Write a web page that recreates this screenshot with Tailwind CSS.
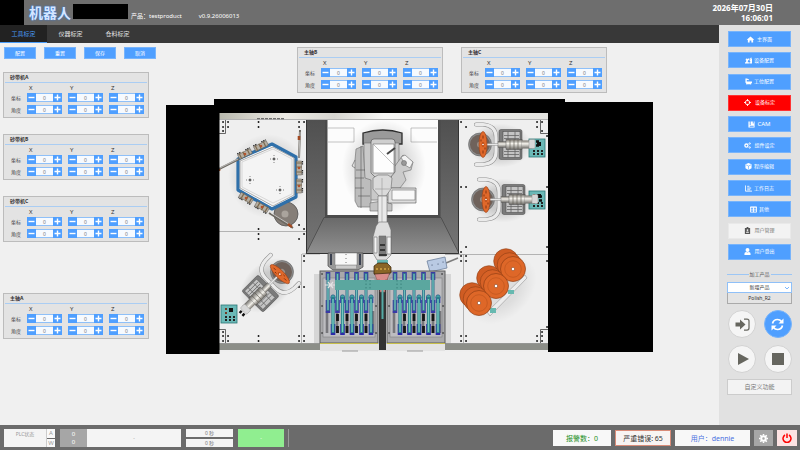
<!DOCTYPE html>
<html lang="zh-CN">

<head>
    <meta charset="utf-8">
    <meta name="viewport" content="width=device-width, initial-scale=1">
    <script src="https://cdn.jsdelivr.net/npm/@tailwindcss/browser@4"></script>
    <title>工具标定</title>
</head>

<body class="min-h-screen flex flex-col bg-[#f0f0f0] text-[#333] text-[5px] leading-none font-['Noto_Sans','Noto_Sans_CJK_SC',sans-serif]">

    <!-- Header -->
    <header class="h-[25px] bg-[#6e6e6e] flex items-center text-white">
        <div class="w-6 h-full bg-black"></div>
        <h1 class="pl-[5px] text-[14px] font-bold text-[#d4e6ff] [text-shadow:0_0_2px_#2f80ff]">机器人</h1>
        <div class="ml-[2px] w-[55px] h-[15px] bg-black self-start mt-1"></div>
        <p class="pl-[3px] pt-[6px] text-[6px]">产品：testproduct</p>
        <p class="pl-[17px] pt-[6px] text-[6px]">v0.9.26006013</p>
        <div class="ml-auto pr-[27px] pt-px text-[8px] leading-[10px] font-bold text-right">
            <div>2026年07月30日</div>
            <div>16:06:01</div>
        </div>
    </header>

    <div class="flex-1 flex">
        <main class="flex-1 min-w-0">
            <!-- Tabs -->
            <nav class="h-[18px] bg-[#383838] flex text-[6px] text-[#e6e6e6]">
                <a href="#" class="w-[47px] flex items-center justify-center bg-[#222] text-[#4a9cf8] border-b border-[#4a9cf8]">工具标定</a>
                <a href="#" class="w-[47px] flex items-center justify-center">仪器标定</a>
                <a href="#" class="w-[47px] flex items-center justify-center">仓料标定</a>
            </nav>

            <div class="flex pt-1">
                <!-- Left column -->
                <div class="w-[166px] shrink-0 pl-[3px]">
                    <div class="flex gap-2 pl-px text-white">
                        <button class="w-8 h-3 bg-[#4f9fff] border border-[#78b4fb]">配置</button>
                        <button class="w-8 h-3 bg-[#4f9fff] border border-[#78b4fb]">重置</button>
                        <button class="w-8 h-3 bg-[#4f9fff] border border-[#78b4fb]">保存</button>
                        <button class="w-8 h-3 bg-[#4f9fff] border border-[#78b4fb]">取消</button>
                    </div>
                    <div class="mt-[13px] flex flex-col gap-4">
                        <div data-panel="砂带机A"></div>
                        <div data-panel="砂带机B"></div>
                        <div data-panel="砂带机C"></div>
                        <div data-panel="主轴A" class="mt-[35px]"></div>
                    </div>
                </div>

                <!-- Work cell -->
                <div class="flex-1 min-w-0">
                    <div class="flex gap-[18px] pl-[131px]">
                        <div data-panel="主轴B"></div>
                        <div data-panel="主轴C"></div>
                    </div>
                    <svg class="mt-[6px] w-[487px] h-[256px]" viewBox="166 99 487 256" role="img" aria-label="工作站">
                        <defs>
                            <linearGradient id="topBand" x1="0" x2="1">
                                <stop offset="0" stop-color="#b9b9ae" /><stop offset=".2" stop-color="#eceae4" /><stop offset=".35" stop-color="#d6d5d0" /><stop offset=".5" stop-color="#f6f6f4" /><stop offset="1" stop-color="#e4e4e0" />
                            </linearGradient>
                            <linearGradient id="ramp" x1="0" x2="0" y1="0" y2="1">
                                <stop offset="0" stop-color="#696969" /><stop offset="1" stop-color="#909090" />
                            </linearGradient>
                            <linearGradient id="wall" x1="0" x2="0" y1="0" y2="1">
                                <stop offset="0" stop-color="#505050" /><stop offset="1" stop-color="#757575" />
                            </linearGradient>
                            <linearGradient id="metal" x1="0" x2="0" y1="0" y2="1">
                                <stop offset="0" stop-color="#77736c" /><stop offset=".4" stop-color="#f4f2ec" /><stop offset="1" stop-color="#6c6a66" />
                            </linearGradient>
                            <radialGradient id="shade">
                                <stop offset=".5" stop-color="#000" stop-opacity=".15" /><stop offset="1" stop-color="#000" stop-opacity="0" />
                            </radialGradient>

                            <!-- grinder, origin on the disc centre -->
                            <g id="grinder">
                                <ellipse cx="20" cy="1" rx="32" ry="22" fill="url(#shade)" />
                                <path d="M-4-20h7q13 1 13 13v14q0 12-13 13h-7" fill="none" stroke="#8e8e8e" stroke-width="4.2" stroke-linecap="round" />
                                <path d="M-4-20h7q13 1 13 13v14q0 12-13 13h-7" fill="none" stroke="#ebebeb" stroke-width="3.2" stroke-linecap="round" />
                                <circle r="11.5" fill="#8d8d8d" stroke="#555" stroke-width=".5" />
                                <circle r="10" fill="#6f625b" />
                                <circle r="3" fill="#9a9089" />
                                <rect x="19" y="-15" width="23" height="30" rx="2" fill="#7b7b7b" stroke="#444" stroke-width=".5" />
                                <rect x="23" y="-13" width="17" height="26" fill="#c4c4c4" stroke="#444" stroke-width=".5" />
                                <path d="M24-9h15M24-6h15M24 7h15M24 10h15M28-13v26M35-13v26" stroke="#666" stroke-width=".8" />
                                <rect x="6" y="-1" width="14" height="2" fill="#e7e7e7" stroke="#777" stroke-width=".4" />
                                <rect x="18" y="-3" width="9" height="6" fill="url(#metal)" stroke="#555" stroke-width=".3" />
                                <rect x="26" y="-5" width="16" height="10" fill="url(#metal)" stroke="#444" stroke-width=".4" />
                                <path d="M30-5v10M34-5v10M38-5v10" stroke="#59554c" stroke-width=".6" />
                                <rect x="42" y="-4" width="10" height="8" fill="url(#metal)" />
                                <rect x="49" y="-5" width="6" height="9" rx="1" fill="#d8d8d8" stroke="#888" stroke-width=".4" />
                                <path d="M56-3h3M56 1h3" stroke="#111" stroke-width="2.4" />
                                <ellipse cx="3" rx="4" ry="13" fill="#e0682a" stroke="#974017" stroke-width=".6" />
                                <ellipse cx="3" rx="1.4" ry="2.4" fill="#b84d18" />
                                <path d="M3-9v3M3 6v3M1-5v2M5 3v2" stroke="#7c300d" stroke-width=".9" />
                                <circle cx="3" r=".8" fill="#fff" />
                            </g>

                            <g id="box">
                                <rect width="16" height="18" fill="#6bb9b7" stroke="#2b7775" stroke-width=".8" />
                                <rect x="8" y="3" width="4" height="4" fill="#111" />
                                <path d="M4 4h2M4 8h2" stroke="#733a25" stroke-width="2" />
                                <path d="M4 12h10M4 15h10" stroke="#222" stroke-width="2" stroke-dasharray="2 2" />
                            </g>

                            <g id="stack">
                                <circle cx="-7" cy="-8" r="12.3" fill="#cf5c23" stroke="#8f3e14" stroke-width=".6" />
                                <circle cx="-3.5" cy="-4" r="12.3" fill="#d66126" stroke="#8f3e14" stroke-width=".6" />
                                <circle r="12.5" fill="#de6728" stroke="#8f3e14" stroke-width=".7" />
                                <circle r="8.3" fill="none" stroke="#b04e1b" stroke-width=".5" />
                                <circle r="1.7" fill="#fff" stroke="#70300f" stroke-width=".5" />
                            </g>

                            <!-- blade holders, upper and lower row -->
                            <g id="bladeUp">
                                <path d="M0 1v8M0 29v13" stroke="#3a3aa6" stroke-width="4.6" />
                                <path d="M0 2v38" stroke="#356f8c" stroke-width="3" />
                                <path d="M0 3v36" stroke="#6bbdb7" stroke-width="1.4" />
                            </g>
                            <g id="bladeLow">
                                <path d="M0 2v6M0 29v11" stroke="#2c2ca8" stroke-width="4.6" />
                                <circle cy="2" r="2.2" fill="#43a3a3" stroke="#244f86" stroke-width=".6" />
                                <path d="M0 2v36" stroke="#297f8c" stroke-width="3.2" />
                                <path d="M0 4v33" stroke="#74c9bd" stroke-width="1.4" />
                            </g>
                            <g id="tray">
                                <rect width="58" height="72" fill="#a9a9ab" stroke="#5d5d5d" />
                                <rect x="3" y="7" width="52" height="59" fill="#bdbdc0" stroke="#777" stroke-width=".5" />
                                <path d="M7 40v22M17 40v22M27 40v22M36 40v22M46 40v22M53 40v22" stroke="#77777b" stroke-width="2.6" />
                                <use href="#bladeUp" x="8" /><use href="#bladeUp" x="17.5" /><use href="#bladeUp" x="27" /><use href="#bladeUp" x="36.5" /><use href="#bladeUp" x="46" />
                                <path d="M17.500 43v7M27 43v7M36.500 43v7M46 43v7M17.500 55v7M27 55v7M36.500 55v7M46 55v7" stroke="#161616" stroke-width="2.8" />
                                <use href="#bladeLow" x="13" y="24" /><use href="#bladeLow" x="22.5" y="24" /><use href="#bladeLow" x="32" y="24" /><use href="#bladeLow" x="41.5" y="24" /><use href="#bladeLow" x="51" y="24" />
                                <path d="M2 3h.1M55 3h.1M2 35h.1M56 35h.1M2 62h.1M56 62h.1" stroke="#222" stroke-width="1.6" stroke-linecap="round" />
                            </g>
                            <g id="clamp">
                                <rect x="-7" y="-2.5" width="14" height="5" fill="#b5aea2" stroke="#5f574c" stroke-width=".5" />
                                <path d="M-5-3v6M-1-3v6M4-3v6" stroke="#7c6a4f" stroke-width="1.2" />
                                <path d="M-7-3.5h4M2-3.5h5" stroke="#222" stroke-width="1.2" stroke-dasharray="1.4 .8" />
                                <circle r="1.3" fill="#b5522b" />
                            </g>
                            <g id="holes">
                                <circle r=".9" fill="#222" />
                                <path d="M-4 0h8M0-4v8" stroke="#444" stroke-width=".8" stroke-dasharray=".8 1.6" />
                            </g>
                        </defs>

                        <!-- floor -->
                        <path d="M219 113h329v239H219z" fill="#efefef" />
                        <path d="M219 113h329v6H219z" fill="url(#topBand)" />
                        <path d="M219 343h101v7H219zM445 343h103v7H445z" fill="#8c8e88" />
                        <path d="M219 119.500h329M219 231.500h87M301.500 254v89M302 254h18M445 254.500h103M463.500 254v89M219 343.500h329" fill="none" stroke="#9a9a9a" stroke-width=".7" />
                        <path d="M219 133.500h6.500V120M548 133.500h-7.500V120M219 329.500h6.500V343M548 329.500h-7.500V343" fill="none" stroke="#444" stroke-width=".8" />
                        <path d="M257 118.700h28" stroke="#555" stroke-dasharray="3 1" />

                        <!-- bolts -->
                        <g fill="none" stroke="#181818" stroke-width="1.8" stroke-linecap="round">
                            <path d="M223 122h.1M228 122h.1M223 127h.1M228 127h.1M223 131h.1M258.500 122h.1M258.500 127h.1M299 122h.1M304 122h.1M299 127h.1" />
                            <path d="M258.500 229h.1M258.500 234h.1M258.500 239h.1M299 225h.1M304 229h.1M304 234h.1M299 239h.1M304 256h.1M304 261h.1M304 287h.1M299 287h.1" />
                            <path d="M223 332h.1M223 336h.1M228 336h.1M223 341h.1M228 341h.1M258.500 336h.1M258.500 341h.1M299 336h.1M304 336h.1M299 341h.1M304 341h.1" />
                            <path d="M461 122h.1M466 127h.1M461 187h.1M466 187h.1M466 247h.1M461 252h.1M461 256h.1M466 256h.1M461 261h.1M466 261h.1M461 336h.1M466 336h.1M461 341h.1M466 341h.1" />
                            <path d="M537 122h.1M542 122h.1M537 127h.1M542 131h.1M547 136h.1M547 187h.1M547 247h.1M547 261h.1M547 327h.1M542 332h.1M537 336h.1M542 336h.1M537 341h.1M542 341h.1" />
                        </g>

                        <!-- robot cabinet -->
                        <path d="M306 120h153v133H306z" fill="url(#wall)" />
                        <path d="M306 253.500l18-36h117l18 36z" fill="url(#ramp)" stroke="#444" stroke-width=".7" />
                        <path d="M325 120h2.500v95H438v-95h2.500v98H325z" fill="#4b4b4b" />
                        <path d="M327.500 120H438v95H327.500z" fill="#fcfcfc" />
                        <path d="M306.500 120v133.500h152V120" fill="none" stroke="#333" />
                        <path d="M328 128h26v14h-26M437 128h-26v14h26" fill="none" stroke="#888" stroke-width=".5" />
                        <ellipse cx="384" cy="168" rx="42" ry="48" fill="url(#shade)" />

                        <!-- robot -->
                        <g stroke="#6b6b6b" stroke-width=".6">
                            <path d="M363 144v-11q20-6 39 0v11z" fill="#9a9a9a" stroke="#2c2c2c" stroke-width="1.3" />
                            <path d="M364 143h35v57h-35z" fill="#c9c9c9" />
                            <path d="M356 149l7-3 2 32 6 2v27h-13l-3-6v-41z" fill="#bcbcbc" />
                            <path d="M355 160l-3 6 3 2M355 178h9M355 188h9M358 196h12M361 146v62M356 170h9" fill="none" stroke="#555" />
                            <path d="M370 203l12-2 10 3v7h-22z" fill="#c3c3c3" />
                            <path d="M392 170l11-15 10 7-2 8-8 2 3 8-6 8h-10z" fill="#cbcbcb" />
                            <path d="M401 157l4-2 8 7-3 6-5-3z" fill="#f3f3f3" />
                            <circle cx="404" cy="163" r="2.500" fill="#999" />
                            <path d="M388 188h28v15h-28z" fill="#dedede" stroke="#555" />
                            <path d="M392 190h23v10h-23z" fill="#f9f9f9" />
                            <path d="M371 142q0-3 3-3h18q3 0 3 3v30l-5 6h-14l-5-5z" fill="#cfcfcf" stroke="#4d4d4d" />
                            <path d="M373 144h21v29h-21z" fill="#fdfdfd" />
                            <path d="M373 144l21 21" fill="none" stroke="#999" />
                            <path d="M387 154l8-6" fill="none" stroke="#444" stroke-width="2" />
                            <path d="M373 178l5-3h10l4 3-1 11-5 7h-7l-6-7z" fill="#dadada" />
                            <path d="M378 196h9v28h-9z" fill="#e9e9e9" />
                            <path d="M382 178v44M375 189h15" fill="none" stroke="#999" />
                            <path d="M376 226l3-4h9l3 8v25l-5 5h-9l-4-7v-16z" fill="#dedede" />
                            <path d="M379 236h7v20h-7z" fill="#7b7b7b" />
                            <path d="M374 237h3v16h-3zM387 237h4v17h-4z" fill="#f4f4f4" />
                        </g>
                        <path d="M380 245h5M380 250h5M379 255h8" stroke="#222" stroke-width="1.3" />

                        <!-- scanner -->
                        <path d="M328 253h35v14l-5 3h-25l-5-4z" fill="#999" stroke="#444" stroke-width=".7" />
                        <path d="M335 253h22v12h-22z" fill="#f8f8f8" stroke="#777" stroke-width=".5" />
                        <path d="M331 254v11M360 254v11" stroke="#3b4150" stroke-width="2" />
                        <path d="M336 267h20" stroke="#ccc" stroke-width="3" />
                        <path d="M346 254v11" stroke="#555" stroke-width=".8" stroke-dasharray="1 3" />
                        <path d="M446 263l12-5" stroke="#7d7d7d" stroke-width="1.600" />
                        <path d="M427 261l18-4 2 11-17 4z" fill="#b9cae3" stroke="#6e819c" stroke-width=".8" />
                        <path d="M432 265h.1M438 264h.1M443 262h.1" stroke="#44536d" stroke-width="1.2" stroke-linecap="round" />

                        <!-- trays -->
                        <path d="M314 274h6v69h-6zM445 274h6v69h-6z" fill="#000" fill-opacity=".1" />
                        <path d="M320 343h125v8H320z" fill="#e3e3e3" />
                        <use href="#tray" x="320" y="271" />
                        <use href="#tray" x="387" y="271" />
                        <path d="M320 343.500h58M387 343.500h58" stroke="#c5bd4a" />
                        <path d="M342 351h16M407 351h16" stroke="#999" />
                        <path d="M379 290h7v60h-7z" fill="#333" />
                        <path d="M374 272h16l-3 8h-2v12h-5v-12h-3z" fill="#d98c8a" stroke="#8b5452" stroke-width=".6" />
                        <path d="M382.500 288v31" stroke="#55aaa5" stroke-width="2" />
                        <path d="M325 285h10M328 282l5 6M328 288l5-6" stroke="#e3e3e3" stroke-width="1.2" />
                        <path d="M335 280h95v10h-95z" fill="#5ba79f" />
                        <path d="M366 280v10M370 280v10M397 280v10M401 280v10" stroke="#347a73" stroke-width=".8" stroke-dasharray="1.500 2" />
                        <path d="M377 260h11v4h-11z" fill="#68b5b0" />
                        <path d="M374 266l4-3h9l4 4v6l-17 1z" fill="#8a6526" stroke="#33240b" stroke-width=".7" />
                        <path d="M376 269h13" stroke="#d5a746" stroke-width="1.4" stroke-dasharray="2 2" />

                        <!-- hexagon table -->
                        <ellipse cx="268" cy="176" rx="40" ry="42" fill="url(#shade)" />
                        <circle cx="286" cy="214" r="12" fill="#857e78" stroke="#555" stroke-width=".8" />
                        <circle cx="285" cy="214" r="3.500" fill="#aaa49d" />
                        <path d="M238 159l34-15 24 13v40l-24 12-34-19z" fill="#fff" stroke="#2f70aa" stroke-width="3.200" stroke-linejoin="round" />
                        <path d="M240 161l33-14 21 11v37l-21 11-33-18z" fill="#f4f4f4" stroke="#777" stroke-width=".6" />
                        <path d="M242 162l31-13 19 10v35l-19 9-31-16z" fill="none" stroke="#c5c5c5" stroke-width=".6" />
                        <use href="#holes" x="274" y="159" /><use href="#holes" x="250" y="180" /><use href="#holes" x="280" y="190" />
                        <path d="M219 169l20-10M300 130l-1 28M269 213l24 15" stroke="#6c6861" stroke-width="2" />
                        <path d="M220 168l18-9M300 132l-1 26M271 213l21 13" stroke="#ddd" stroke-width=".7" />
                        <path d="M299 136v4M288 224l4 3M219 169v2" stroke="#a24a22" stroke-width="2.6" />
                        <use href="#clamp" transform="translate(245 154) rotate(-26)" />
                        <use href="#clamp" transform="translate(261 146) rotate(-26)" />
                        <use href="#clamp" transform="translate(299 168) rotate(90)" />
                        <use href="#clamp" transform="translate(299 186) rotate(90)" />
                        <use href="#clamp" transform="translate(246 198) rotate(210)" />
                        <use href="#clamp" transform="translate(262 207) rotate(210)" />

                        <!-- grinders -->
                        <use href="#grinder" transform="translate(282 272) rotate(135)" />
                        <use href="#box" x="221" y="305" />
                        <use href="#box" x="529" y="139" />
                        <use href="#box" x="529" y="191" />
                        <use href="#grinder" transform="translate(480 144.500)" />
                        <use href="#grinder" transform="translate(483 199.500)" />

                        <!-- disc rack -->
                        <ellipse cx="502" cy="290" rx="40" ry="28" fill="url(#shade)" transform="rotate(-44 502 290)" opacity=".5" />
                        <path d="M487 312l38-37 2 3-37 38z" fill="#ececec" stroke="#888" stroke-width=".5" />
                        <path d="M508 290h6v4h-6zM490 308h6v5h-6z" fill="#67b9b0" />
                        <use href="#stack" x="513" y="269" />
                        <use href="#stack" x="496" y="286" />
                        <use href="#stack" x="479" y="303" />

                        <!-- masked areas -->
                        <path d="M166 105h48v-6h351v3h88v250H548V113H219.500v241H166z" fill="#000" />
                    </svg>
                </div>
            </div>
        </main>

        <!-- Sidebar -->
        <aside class="w-[81px] shrink-0 bg-[#e1e1e1] px-[9px] pt-[6px]">
            <nav class="h-[229px] flex flex-col justify-between text-white">
                <button class="h-4 flex items-center justify-center gap-[3px] bg-[#4f9fff] border border-[#78b4fb]">
                    <svg class="w-[7px] h-[7px]" viewBox="0 0 16 16" fill="currentColor"><path d="M8 1L0 8l1 1 1-.5V15h4v-5h4v5h4V8.500l1 .5 1-1z" /></svg>主界面
                </button>
                <button class="h-4 flex items-center justify-center gap-[2px] bg-[#4f9fff] border border-[#78b4fb]">
                    <svg class="w-[7px] h-[7px]" viewBox="0 0 16 16" fill="currentColor"><path d="M0 15v-3h2l2-6 5-3 2 2-4 3-1 4h3v3zM10 8l2-2V2l3-1v3l1 1v10h-6v-3h2V9z" /><circle cx="4" cy="6" r="2.500" /></svg>设备配置
                </button>
                <button class="h-4 flex items-center justify-center gap-[2px] bg-[#4f9fff] border border-[#78b4fb]">
                    <svg class="w-[7px] h-[7px]" viewBox="0 0 16 16" fill="currentColor"><path d="M1 1h3l5 2-1 2-4-1v4h12v3l-2 2v2h-2v-1H5v1H3v-2l-2-3z" /></svg>工位配置
                </button>
                <button class="h-4 flex items-center justify-center gap-1 bg-[#ff0000] border border-[#f33]">
                    <svg class="w-[7px] h-[7px]" viewBox="0 0 16 16" fill="none" stroke="currentColor" stroke-width="2"><circle cx="8" cy="8" r="5" /><path d="M8 0v5M8 11v5M0 8h5M11 8h5" /></svg>设备标定
                </button>
                <button class="h-4 flex items-center justify-center gap-[2px] bg-[#4f9fff] border border-[#78b4fb] text-[6px]">
                    <svg class="w-[7px] h-[7px]" viewBox="0 0 16 16" fill="currentColor"><path d="M1 1h3v8h2V1h5v5l2-1V1h2v14H1zM4 11v2h9v-2z" fill-rule="evenodd" /></svg>CAM
                </button>
                <button class="h-4 flex items-center justify-center gap-[3px] bg-[#4f9fff] border border-[#78b4fb]">
                    <svg class="w-[7px] h-[7px]" viewBox="0 0 16 16" fill="none" stroke="currentColor"><circle cx="5.500" cy="8" r="3.500" stroke-width="3" /><circle cx="13" cy="3.500" r="1.700" stroke-width="2" /><circle cx="13" cy="12.500" r="1.700" stroke-width="2" /></svg>组件设定
                </button>
                <button class="h-4 flex items-center justify-center gap-[2px] bg-[#4f9fff] border border-[#78b4fb]">
                    <svg class="w-[7px] h-[7px]" viewBox="0 0 16 16" fill="currentColor"><path d="M8 0l7 3v9l-7 4-7-4V3z" /><path d="M2 4l6 3 6-3M8 7v8" fill="none" stroke="#4f9fff" stroke-width="1.300" /></svg>程序编辑
                </button>
                <button class="h-4 flex items-center justify-center gap-[2px] bg-[#4f9fff] border border-[#78b4fb]">
                    <svg class="w-[7px] h-[7px]" viewBox="0 0 16 16" fill="none" stroke="currentColor" stroke-width="2"><path d="M1 1v13h15M5 3h5M5 7h9M5 11h7" /></svg>工作日志
                </button>
                <button class="h-4 flex items-center justify-center gap-[2px] bg-[#4f9fff] border border-[#78b4fb]">
                    <svg class="w-[7px] h-[7px]" viewBox="0 0 16 16" fill="none" stroke="currentColor" stroke-width="2"><path d="M1 2h14v12H1zM1 4h14M1 9h14M8 3v11" /></svg>其他
                </button>
                <button class="h-4 flex items-center justify-center gap-[3px] bg-[#f3f3f3] border border-[#e9e9e9] text-[#777]">
                    <svg class="w-[7px] h-[7px]" viewBox="0 0 16 16" fill="#555"><path d="M2 2h4V0h4v2h4v14H2z" /><circle cx="8" cy="7" r="2" fill="#f3f3f3" /><path d="M4.500 13q0-3 3.500-3t3.500 3z" fill="#f3f3f3" /></svg>用户管理
                </button>
                <button class="h-4 flex items-center justify-center gap-[3px] bg-[#4f9fff] border border-[#78b4fb]">
                    <svg class="w-[7px] h-[7px]" viewBox="0 0 16 16" fill="currentColor"><circle cx="8" cy="4.500" r="4.500" /><path d="M1 16v-3q0-4 4-4 3 2 6 0 4 0 4 4v3z" /></svg>用户登出
                </button>
            </nav>

            <div class="-mx-px">
                <div class="mt-3 flex items-center gap-px text-[#555]">
                    <span class="flex-1 h-px bg-[#9cc6f5]"></span>
                    <label for="product">加工产品</label>
                    <span class="flex-1 h-px bg-[#9cc6f5]"></span>
                </div>
                <div class="mt-[5px] relative">
                    <select id="product" class="block appearance-none w-full h-[11px] bg-white border border-[#8fc0f8] text-center [text-align-last:center]">
                        <option>新增产品</option>
                        <option>Polish_R2</option>
                    </select>
                    <svg class="absolute right-[3px] top-1 w-1 h-1 pointer-events-none" viewBox="0 0 8 8" fill="none" stroke="#4f9fff" stroke-width="1.500"><path d="M0 2l4 4 4-4" /></svg>
                </div>
                <div class="h-[11px] flex items-center justify-center bg-[#e4e4e4] border border-[#aaa] border-t-0">Polish_R2</div>

                <div class="mt-[6px] px-px grid grid-cols-2 gap-x-2 gap-y-[7px]">
                    <button aria-label="进入" class="h-7 w-7 flex items-center justify-center rounded-full bg-[#f5f5f5] border border-[#d2d2d2] text-[#66665f]">
                        <svg class="w-[15px] h-[13px]" viewBox="0 0 30 26" fill="currentColor"><path d="M1 9h9V3l11 10-11 10v-6H1z" /><path d="M18 2h6q4 0 4 4v14q0 4-4 4h-6" fill="none" stroke="currentColor" stroke-width="2.500" /></svg>
                    </button>
                    <button aria-label="刷新" class="h-7 w-7 flex items-center justify-center rounded-full bg-[#4f9fff] border border-[#78b4fb] text-white">
                        <svg class="w-[13px] h-[13px]" viewBox="0 0 26 26" fill="none" stroke="currentColor" stroke-width="3.400"><path d="M3 11q2-8 10-8 5 0 8 4M23 15q-2 8-10 8-5 0-8-4" /><path d="M25 1v10H15zM1 25V15h10z" fill="currentColor" stroke="none" /></svg>
                    </button>
                    <button aria-label="启动" class="h-7 w-7 flex items-center justify-center rounded-full bg-[#f5f5f5] border border-[#d2d2d2] text-[#66665f]">
                        <svg class="w-3 h-3 ml-px" viewBox="0 0 12 12" fill="currentColor"><path d="M1 0l11 6-11 6z" /></svg>
                    </button>
                    <button aria-label="停止" class="h-7 w-7 flex items-center justify-center rounded-full bg-[#f5f5f5] border border-[#d2d2d2] text-[#66665f]">
                        <svg class="w-3 h-3" viewBox="0 0 12 12" fill="currentColor"><path d="M0 0h12v12H0z" /></svg>
                    </button>
                </div>
                <button class="mt-[6px] block w-full h-4 bg-[#f3f3f3] border border-[#ccc] text-[6px] text-[#777]">自定义功能</button>
            </div>
        </aside>
    </div>

    <!-- Status bar -->
    <footer class="h-[25px] bg-[#6b6b6b] pt-1 pb-[3px] pl-1 pr-[3px] flex text-[#999]">
        <div class="w-[42px] bg-[#f4f4f4] pt-[3px] text-center">PLC状态</div>
        <div class="w-[9px] flex flex-col gap-px border-l border-[#ccc] text-[6px]">
            <span class="flex-1 flex items-center justify-center bg-[#f9f9f9]">A</span>
            <span class="flex-1 flex items-center justify-center bg-[#f9f9f9]">W</span>
        </div>
        <div class="ml-[5px] w-[27px] flex flex-col items-center justify-center gap-[2px] bg-[#a6a6a6] text-white text-[6px]">
            <span>0</span><span>0</span>
        </div>
        <div class="w-[94px] flex items-center justify-center bg-[#f4f4f4]">-</div>
        <div class="ml-[5px] w-[47px] flex flex-col gap-[2px] text-[#777]">
            <span class="flex-1 flex items-center justify-center bg-[#f4f4f4]">0 秒</span>
            <span class="flex-1 flex items-center justify-center bg-[#f4f4f4]">0 秒</span>
        </div>
        <div class="ml-[5px] w-[46px] flex items-center justify-center bg-[#90ee90] text-white">-</div>
        <div class="ml-1 w-px bg-[#9a9a9a]"></div>

        <div class="ml-auto flex gap-1 py-px text-[7px]">
            <div class="w-[58px] flex items-center justify-center bg-[#f8f8f8] text-[#1d8f1d]">报警数：0</div>
            <div class="w-14 flex items-center justify-center bg-[#f8f4f2] border border-[#d98c78] text-[#333] whitespace-nowrap">严重错误: 65</div>
            <div class="w-[75px] flex items-center justify-center bg-[#f8f8f8] text-[#4a70e0]">用户：dennie</div>
            <button aria-label="设置" class="w-[19px] flex items-center justify-center bg-[#a6a6a6] text-white">
                <svg class="w-[9px] h-[9px]" viewBox="0 0 18 18" fill="none" stroke="currentColor"><circle cx="9" cy="9" r="4.500" stroke-width="4" /><path d="M9 0v3M9 15v3M0 9h3M15 9h3M2.500 2.500l2.500 2.500M13 13l2.500 2.500M2.500 15.500L5 13M13 5l2.500-2.500" stroke-width="3" /></svg>
            </button>
            <button aria-label="关机" class="w-5 flex items-center justify-center bg-[#fde3e3] text-[#f00]">
                <svg class="w-[10px] h-[10px]" viewBox="0 0 20 20" fill="none" stroke="currentColor" stroke-width="3"><path d="M6 4a8 8 0 1 0 8 0M10 1v9" /></svg>
            </button>
        </div>
    </footer>

    <script>
        // One panel per tool: X / Y / Z steppers for position and angle
        const axes = ['X', 'Y', 'Z'];

        function stepper(name, row, axis) {
            const label = name + ' ' + row + ' ' + axis;
            return `
                <div class="w-[35px] h-[9px] flex bg-[#f6faff]">
                    <button class="w-[9px] flex items-center justify-center bg-[#4f9fff]" data-step="-1" aria-label="${label} 减">
                        <svg class="w-[7px] h-[7px]" viewBox="0 0 7 7" stroke="#fff" stroke-width="1.400"><path d="M.5 3.500h6" /></svg>
                    </button>
                    <input class="flex-1 min-w-0 bg-transparent border-y border-[#8fc0f8] text-center text-[5px] leading-none text-[#777] outline-none" value="0" aria-label="${label}">
                    <button class="w-[9px] flex items-center justify-center bg-[#4f9fff]" data-step="1" aria-label="${label} 加">
                        <svg class="w-[7px] h-[7px]" viewBox="0 0 7 7" stroke="#fff" stroke-width="1.400"><path d="M.5 3.500h6M3.500 .5v6" /></svg>
                    </button>
                </div>`;
        }

        function row(name, title) {
            return `
                <div class="flex items-center gap-[6px]">
                    <span class="w-[10px] pt-px whitespace-nowrap text-[#444]">${title}</span>
                    ${axes.map(axis => stepper(name, title, axis)).join('')}
                </div>`;
        }

        document.querySelectorAll('[data-panel]').forEach(el => {
            const name = el.dataset.panel;
            el.innerHTML = `
                <section class="w-[146px] h-[46px] border border-[#bcbcbc] bg-[#e3e3e3]">
                    <h2 class="mx-px h-[10px] pl-[5px] flex items-center font-bold border-b border-[#aacdf3]">${name}</h2>
                    <div class="h-[10px] pl-[23px] flex items-center gap-[6px] text-[6px]">
                        ${axes.map(axis => `<span class="w-[35px] pl-[2px]">${axis}</span>`).join('')}
                    </div>
                    <div class="pl-[7px] flex flex-col gap-[3px]">
                        ${row(name, '坐标')}
                        ${row(name, '角度')}
                    </div>
                </section>`;
        });

        document.addEventListener('click', e => {
            const btn = e.target.closest('[data-step]');
            if (!btn) return;
            const input = btn.parentElement.querySelector('input');
            input.value = Number(input.value) + Number(btn.dataset.step);
        });
    </script>
</body>

</html>
